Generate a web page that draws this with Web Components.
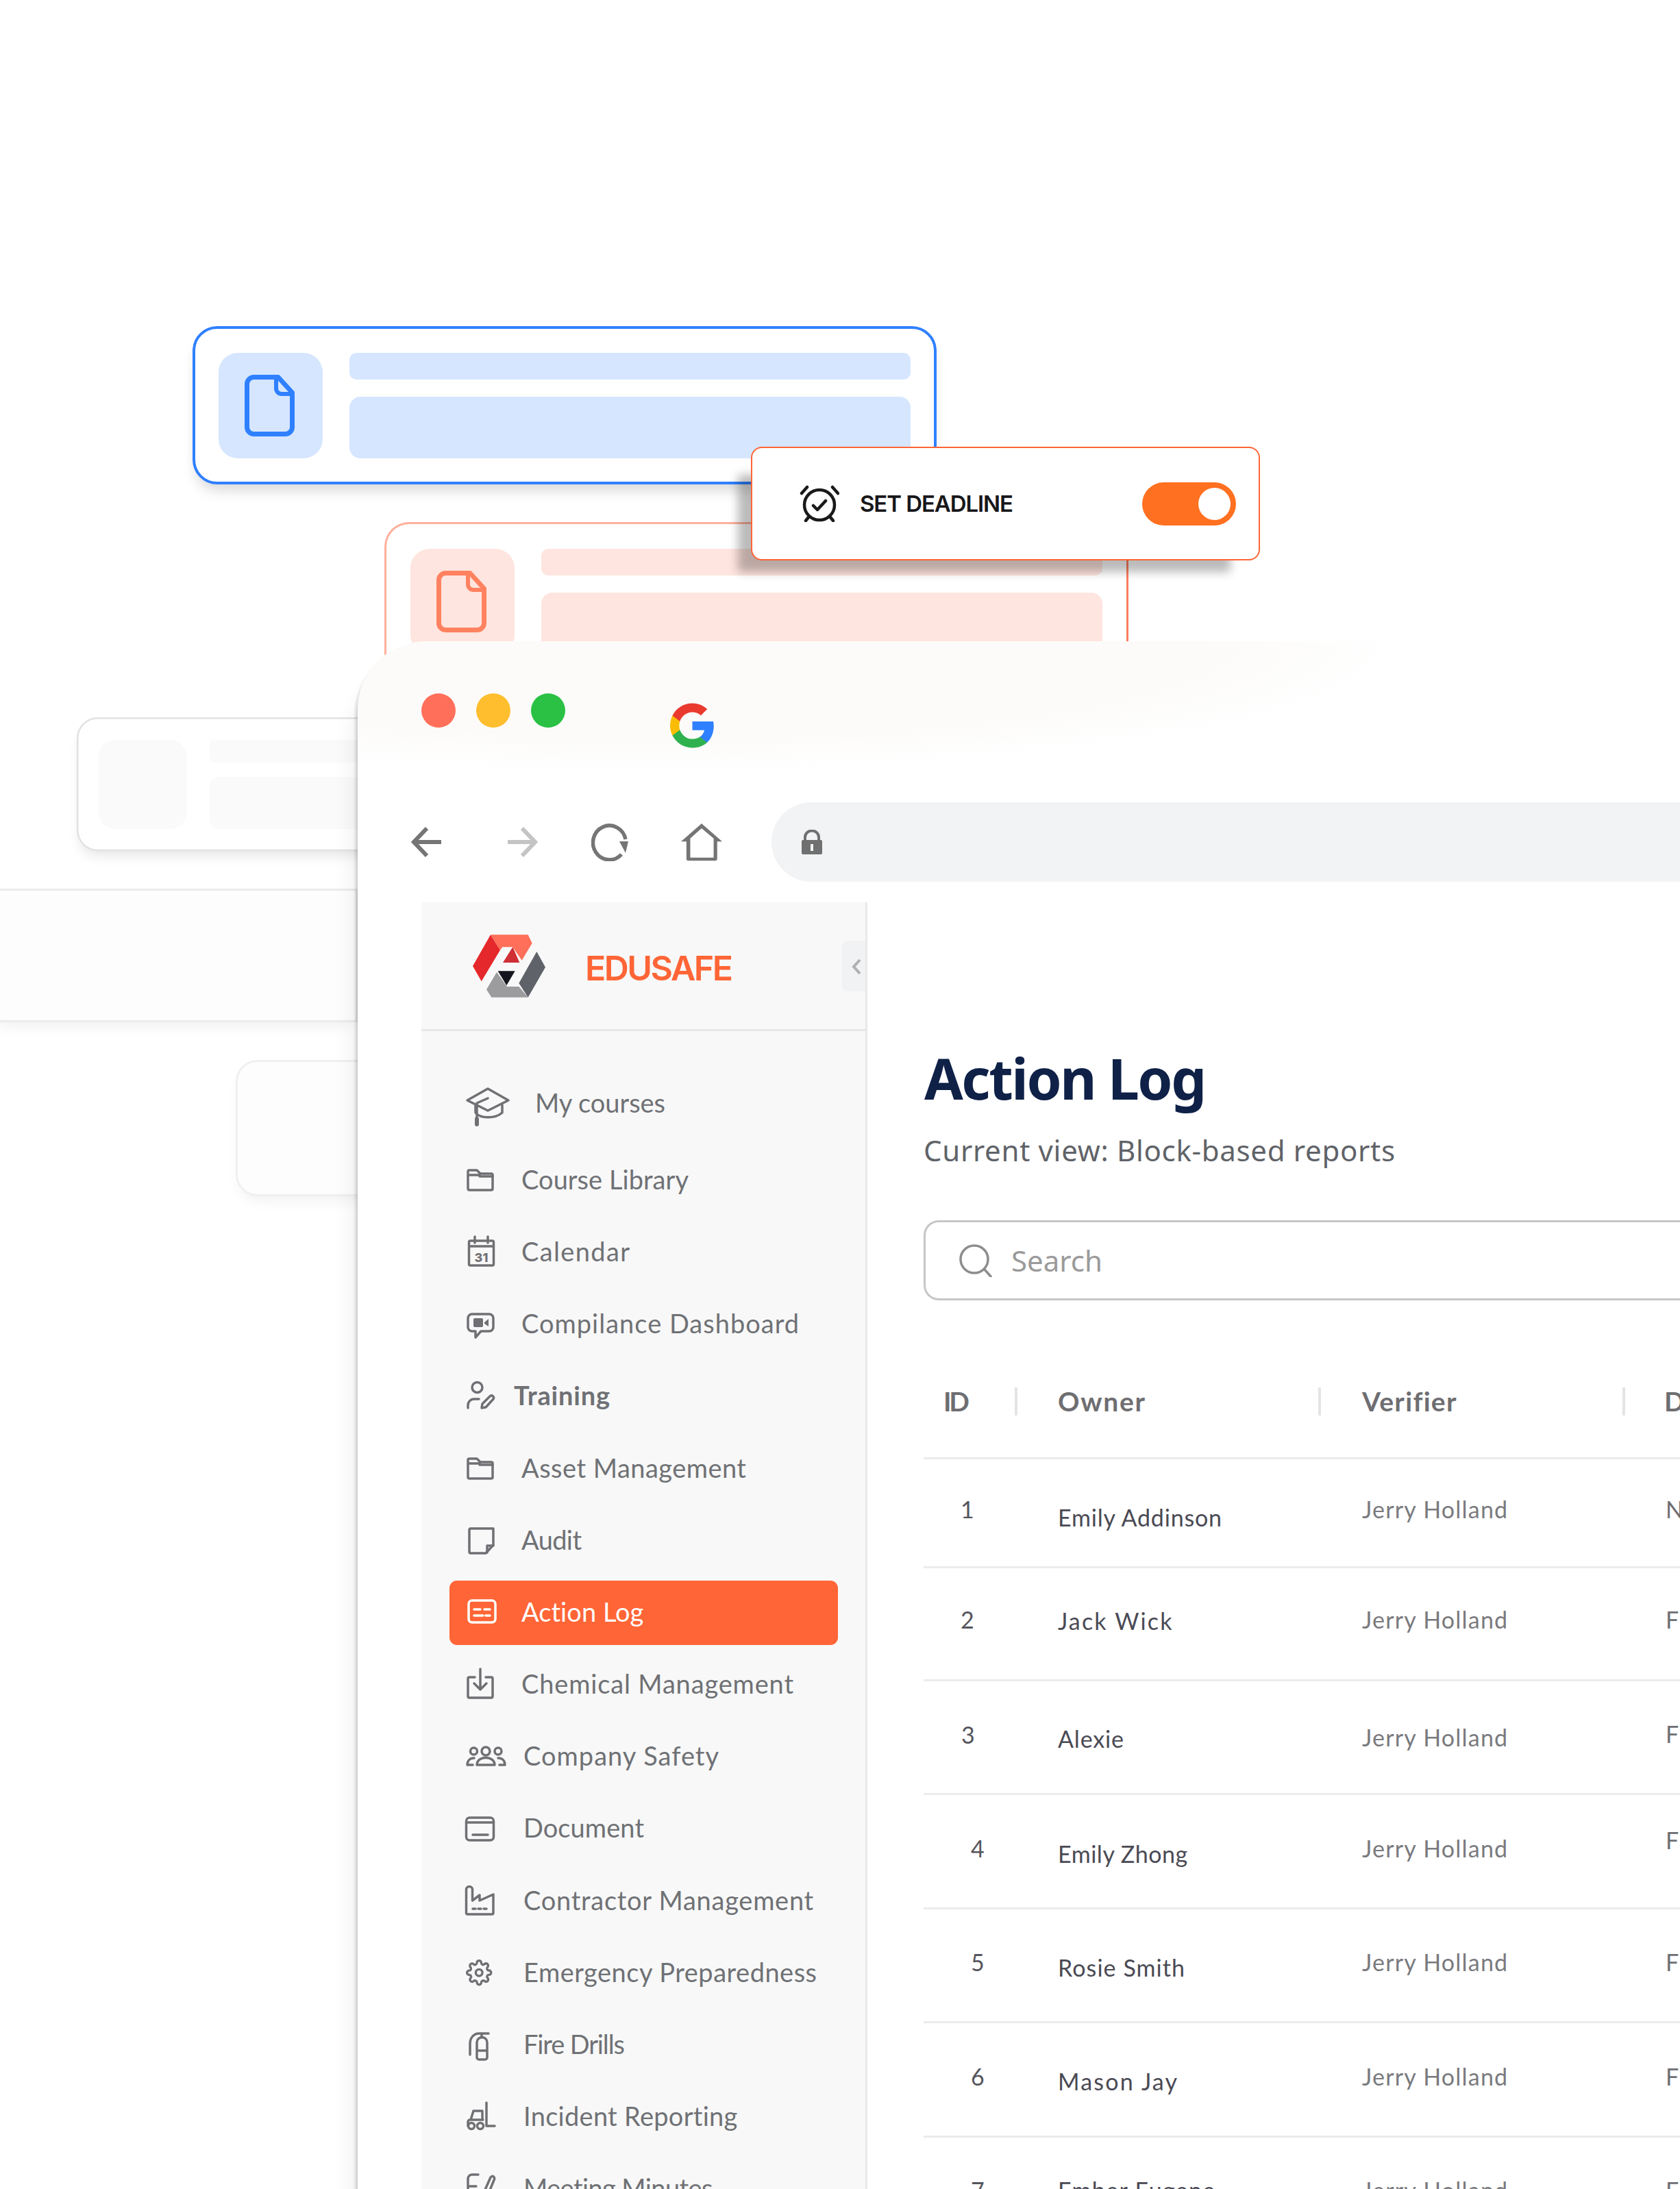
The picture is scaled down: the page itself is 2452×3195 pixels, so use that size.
<!doctype html>
<html lang="en"><head><meta charset="utf-8"><title>Action Log</title>
<style>
html,body{margin:0;padding:0;background:#fff}
body{width:2452px;height:3195px;overflow:hidden;font-family:Lato,"Liberation Sans",sans-serif}
illustration-canvas{display:block;position:relative;width:2452px;height:3195px;overflow:hidden}
</style></head><body>
<illustration-canvas>
  <ghost-panel style="left:-10px;top:1297px;width:532px;height:195px;--r:0px;--bc:#ececec"></ghost-panel>
  <ghost-panel style="left:344px;top:1547px;width:300px;height:199px;--r:32px;--bc:#f0f0f0"></ghost-panel>
  <doc-card tone="ghost" style="left:112px;top:1047px;transform:scale(.845)"></doc-card>
  <doc-card tone="salmon" style="left:561px;top:762px;width:1086px"></doc-card>
  <doc-card tone="blue" style="left:281px;top:476px;width:1086px"></doc-card>
  <deadline-card style="left:1096px;top:652px"></deadline-card>
  <browser-window style="left:522px;top:936px">
    <browser-chrome></browser-chrome>
    <div style="display:flex;padding-top:30px;align-items:stretch;height:1878px">
      <side-bar>
        <nav-item icon="cap" x="100" w="191" first>My courses</nav-item>
        <nav-item icon="folder" x="80" w="244">Course Library</nav-item>
        <nav-item icon="calendar" x="80" w="158">Calendar</nav-item>
        <nav-item icon="video" x="80" w="405">Compilance Dashboard</nav-item>
        <nav-item icon="training" x="69" w="140" bold>Training</nav-item>
        <nav-item icon="folder" x="80" w="328">Asset Management</nav-item>
        <nav-item icon="note" x="80" w="88">Audit</nav-item>
        <nav-item icon="idcard" x="80" w="179" active>Action Log</nav-item>
        <nav-item icon="tray" x="80" w="397">Chemical Management</nav-item>
        <nav-item icon="people" x="83" w="286">Company Safety</nav-item>
        <nav-item icon="card" x="83" w="176">Document</nav-item>
        <nav-item icon="factory" x="83" w="424">Contractor Management</nav-item>
        <nav-item icon="gear" x="83" w="429">Emergency Preparedness</nav-item>
        <nav-item icon="ext" x="83" w="148">Fire Drills</nav-item>
        <nav-item icon="fork" x="83" w="313">Incident Reporting</nav-item>
        <nav-item icon="minutes" x="83" w="277">Meeting Minutes</nav-item>
      </side-bar>
      <main-panel></main-panel>
    </div>
  </browser-window>
</illustration-canvas>
<script>
const fitTo=(el,text,w)=>{
  const cs=getComputedStyle(el),c=document.createElement('canvas').getContext('2d');
  c.font=`${cs.fontWeight} ${cs.fontSize} ${cs.fontFamily}`;
  const m=c.measureText(text).width,n=Math.max(text.length-1,1);
  el.style.letterSpacing=((w-m)/n).toFixed(3)+'px';
};
class FitText extends HTMLElement{
  constructor(){super();this.attachShadow({mode:'open'}).innerHTML='<style>:host{display:inline-block;white-space:nowrap}</style><slot></slot>'}
  connectedCallback(){fitTo(this,this.textContent.trim(),+this.getAttribute('w'))}
}
customElements.define('fit-text',FitText);

const DOC=(c)=>`<svg style="margin-left:-3px" width="73" height="90" viewBox="0 0 73 90" fill="none" stroke="${c}" stroke-width="7" stroke-linejoin="round"><path d="M14 3.5H49L69.5 26V76.5a10 10 0 0 1-10 10H13.5a10 10 0 0 1-10-10V13.5a10 10 0 0 1 10-10z"/><path d="M46 4V20a8 8 0 0 0 8 8H69" stroke-width="6"/></svg>`;
const TONES={
 blue:{b:'#2f80ff',br:'#2f80ff',f:'#d6e6ff',i:DOC('#2f80ff'),w:4,sh:'0 14px 20px -6px rgba(0,0,0,.16)'},
 salmon:{b:'#ffb09b',br:'#ff7d5e',f:'#ffe5df',i:DOC('#ff8260'),w:3,sh:'none'},
 ghost:{b:'#e2e2e2',br:'#e2e2e2',f:'#fafafa',i:'',w:3,sh:'0 14px 22px -6px rgba(0,0,0,.10)'}
};
class DocCard extends HTMLElement{
  connectedCallback(){
    const t=TONES[this.getAttribute('tone')];
    this.attachShadow({mode:'open'}).innerHTML=`<style>
    :host{position:absolute;display:block;transform-origin:0 0;box-sizing:border-box;width:1087px;height:231px;background:#fff;border:${t.w}px solid ${t.b};border-right-color:${t.br};border-radius:36px;box-shadow:${t.sh};padding:${39-t.w}px ${38-t.w}px;}
    .row{display:flex;gap:39px}
    .ic{width:152px;height:154px;flex:none;border-radius:28px;background:${t.f};display:flex;align-items:center;justify-content:center}
    .bars{flex:1;display:flex;flex-direction:column;gap:25px}
    .a{height:39px;border-radius:10px;background:${t.f}}
    .b{height:90px;border-radius:16px;background:${t.f}}
    </style><div class="row"><div class="ic">${t.i}</div><div class="bars"><div class="a"></div><div class="b"></div></div></div>`;
  }
}
customElements.define('doc-card',DocCard);

class GhostPanel extends HTMLElement{
  constructor(){super();this.attachShadow({mode:'open'}).innerHTML=`<style>:host{position:absolute;display:block;box-sizing:border-box;background:#fdfdfd;border:3px solid var(--bc);border-radius:var(--r);box-shadow:0 12px 22px -8px rgba(0,0,0,.07)}</style>`}
}
customElements.define('ghost-panel',GhostPanel);

class DeadlineCard extends HTMLElement{
  constructor(){super();this.attachShadow({mode:'open'}).innerHTML=`<style>
  :host{position:absolute;display:flex;align-items:center;box-sizing:border-box;width:743px;height:166px;background:#fff;border:2px solid #ff6536;border-radius:16px;box-shadow:-31px 29px 14px -12px rgba(0,0,0,.27);padding-left:69px;font:600 33px Inter,sans-serif;color:#17171a}
  svg.al{flex:none;margin-right:30px}
  fit-text{line-height:40px}
  .tg{margin-left:auto;margin-right:33px;width:137px;height:63px;border-radius:32px;background:#ff7020;display:flex;align-items:center;justify-content:flex-end;padding-right:8px;box-sizing:border-box}
  .kn{width:47px;height:47px;border-radius:50%;background:#fff}
  </style>
  <svg class="al" width="58" height="54" viewBox="1167 709 58 54" fill="none" stroke="#1a1a1a" stroke-width="4.5" stroke-linecap="round" stroke-linejoin="round"><circle cx="1196" cy="738" r="22"/><path d="M1170 721l8-9M1223 721l-8-9M1180 756l-4 5M1212 756l4 5M1187 739l6 6 12-13"/></svg>
  <fit-text w="224">SET DEADLINE</fit-text>
  <div class="tg"><div class="kn"></div></div>`}
}
customElements.define('deadline-card',DeadlineCard);

class BrowserWindow extends HTMLElement{
  constructor(){super();this.attachShadow({mode:'open'}).innerHTML=`<style>
  :host{position:absolute;display:block;width:1930px;height:2259px;background:#fff;border-radius:100px 0 0 0;box-shadow:-3px 7px 4px rgba(0,0,0,.17),-10px 44px 30px rgba(0,0,0,.06)}
  .clip{width:100%;height:100%;overflow:hidden;border-radius:100px 0 0 0}
  </style><div class="clip"><slot></slot></div>`}
}
customElements.define('browser-window',BrowserWindow);

class BrowserChrome extends HTMLElement{
  constructor(){super();this.attachShadow({mode:'open'}).innerHTML=`<style>
  :host{display:block}
  .title{height:235px;box-sizing:border-box;display:flex;align-items:flex-start;padding:76px 0 0 93px;gap:30px;background:radial-gradient(ellipse 1120px 190px at 420px 0,#fcfbf9 72%,#fff 100%)}
  .dot{width:50px;height:50px;border-radius:50%;flex:none}
  .g{margin:14px 0 0 123px;display:block}
  .tools{height:116px;display:flex;align-items:center;padding-left:78px}
  .tools svg{display:block;flex:none}
  .url{flex:1;height:116px;margin-left:72px;background:#f1f3f4;border-radius:58px 0 0 58px;display:flex;align-items:center;padding-left:44px}
  </style>
  <div class="title">
    <span class="dot" style="background:#ff6f59"></span><span class="dot" style="background:#ffbe2e"></span><span class="dot" style="background:#2ac144"></span>
    <svg class="g" width="65" height="66" viewBox="2 2 44 44"><path fill="#2f80ff" d="M45.12 24.5c0-1.56-.14-3.06-.4-4.5H24v8.51h11.84c-.51 2.75-2.06 5.08-4.39 6.64v5.52h7.11c4.16-3.83 6.56-9.47 6.56-16.17z"/><path fill="#2fb14f" d="M24 46c5.94 0 10.92-1.97 14.56-5.33l-7.11-5.52c-1.97 1.32-4.49 2.1-7.45 2.1-5.73 0-10.58-3.87-12.31-9.07H4.34v5.7C7.96 41.07 15.4 46 24 46z"/><path fill="#fbbc05" d="M11.69 28.18C11.25 26.86 11 25.45 11 24s.25-2.86.69-4.18v-5.7H4.34C2.85 17.09 2 20.45 2 24c0 3.55.85 6.91 2.34 9.88l7.35-5.7z"/><path fill="#ea3a2f" d="M24 10.75c3.23 0 6.13 1.11 8.41 3.29l6.31-6.31C34.91 4.18 29.93 2 24 2 15.4 2 7.96 6.93 4.34 14.12l7.35 5.7c1.73-5.2 6.58-9.07 12.31-9.07z"/></svg>
  </div>
  <div class="tools">
    <svg width="44" height="44" viewBox="0 0 44 44" fill="none" stroke="#757575" stroke-width="6"><path d="M44 22H4M23 2L4 22l19 20"/></svg>
    <svg style="margin-left:97px" width="44" height="44" viewBox="0 0 44 44" fill="none" stroke="#c4c4c4" stroke-width="6"><path d="M0 22h40M21 2l19 20-19 20"/></svg>
    <svg style="margin-left:78px" width="54" height="56" viewBox="0 0 54 56"><path d="M50 24A24 25 0 1 0 44 46" fill="none" stroke="#757575" stroke-width="5.5"/><path d="M41 27h13l-4 17z" fill="#757575"/></svg>
    <svg style="margin-left:77px" width="60" height="55" viewBox="0 0 58 53"><path fill="#757575" fill-rule="evenodd" d="M0 25.3L29 0l29 25.3H51V50a2.3 2.3 0 0 1-2.300 2.300H10a2.300 2.300 0 0 1-2.400-2.300V25.300zM13 21V48H46V21L29 6.600z"/></svg>
    <div class="url"><svg width="30" height="36" viewBox="0 0 30 36"><path d="M5 15V11a10 9.500 0 0 1 20 0v4" fill="none" stroke="#707070" stroke-width="4"/><rect y="15" width="30" height="21" rx="2" fill="#707070"/><rect x="13" y="21" width="4" height="10" fill="#f1f3f4"/></svg></div>
  </div>`}
}
customElements.define('browser-chrome',BrowserChrome);

class SideBar extends HTMLElement{
  constructor(){super();this.attachShadow({mode:'open'}).innerHTML=`<style>
  :host{display:block;flex:none;width:651px;margin-left:93px;box-sizing:border-box;background:#f8f8f8;border-right:3px solid #e9e9e9}
  .head{height:188px;box-sizing:border-box;border-bottom:3px solid #e8e8e8;display:flex;align-items:center;padding-left:65px;margin-right:-3px}
  .logo{flex:none;display:block}
  .brand{margin-left:44px;font:600 50px Inter,sans-serif;color:#ff6536;line-height:58px;padding-top:6px}
  .col{margin-left:auto;margin-right:3px;width:34px;height:74px;background:#f1f2f3;border-radius:8px 0 0 8px;display:flex;align-items:center;justify-content:flex-end;padding:3px 6px 0 0;box-sizing:border-box}
  .list{padding-top:51px}
  </style>
  <div class="head">
    <svg class="logo" width="130" height="110" viewBox="0 0 390 330">
      <path fill="#e5282b" d="M108 28l42 67-82 137-38-67z"/>
      <path fill="#ff6f59" d="M108 28h164l18 37-45 75-40-58h-45l-10 13z"/>
      <path fill="#cf2f35" d="M205 82l30 68h-73z"/>
      <path fill="#60626a" d="M310 102l38 68-76 132-40-62z"/>
      <path fill="#9c9c9e" d="M135 192l45 63h52l40 47H112l-22-34z"/>
      <path fill="#15151d" d="M140 187h75l-37 63z"/>
    </svg>
    <fit-text class="brand" w="216">EDUSAFE</fit-text>
    <div class="col"><svg width="14" height="24" viewBox="0 0 14 24" fill="none" stroke="#b0b0b2" stroke-width="4"><path d="M12 2L3 12l9 10"/></svg></div>
  </div>
  <div class="list"><slot></slot></div>`}
}
customElements.define('side-bar',SideBar);

const ICONS={
 cap:`<path d="M1-3L31-20 61-3 31 12z"/><path d="M13 4V15C20 24 42 24 52 15V4"/><path d="M31-6L15 1V26"/><path d="M15 24V32" stroke-width="6" stroke-linecap="round"/>`,
 folder:`<path d="M2-11a2 2 0 0 1 2-2H15l5 5H36a2 2 0 0 1 2 2V14a2 2 0 0 1-2 2H4a2 2 0 0 1-2-2zM2-6H19"/><path d="M19-4H38"/>`,
 calendar:`<rect x="3.500" y="-15" width="36" height="36" rx="2"/><path d="M4-7H39M12-21V-12M31-21V-12"/><text x="21.500" y="16" text-anchor="middle" font-family="Inter,sans-serif" font-weight="800" font-size="18" fill="#707074" stroke="none">31</text>`,
 video:`<path d="M8-13H33a6 6 0 0 1 6 6V6a6 6 0 0 1-6 6H21L13 21V12H8a6 6 0 0 1-6-6V-7a6 6 0 0 1 6-6z"/><rect x="10" y="-7" width="14" height="13" rx="2" fill="#707074" stroke="none"/><path d="M26-1l6-5V5l-6-4z" fill="#707074" stroke="none"/>`,
 training:`<circle cx="15.500" cy="-11" r="7.500"/><path d="M2 19V15a9 9 0 0 1 9-9H18"/><path d="M22 19l1-6L34 2c3-3 7 1 5 4L28 18z"/>`,
 note:`<path d="M6-16H39V8L28 20H6a2 2 0 0 1-2-2V-14a2 2 0 0 1 2-2z"/><path d="M39 9H30V19"/>`,
 idcard:`<rect x="3" y="-16" width="39" height="32" rx="5"/><path d="M11-3H20M26-3H34M11 6H24M28 6H34"/>`,
 tray:`<path d="M12-9H4a2 2 0 0 0-2 2V19a2 2 0 0 0 2 2H36a2 2 0 0 0 2-2V-7a2 2 0 0 0-2-2H28"/><path d="M20-21V8M11 0l9 9 9-9"/>`,
 people:`<circle cx="28" cy="-6" r="6"/><circle cx="10.500" cy="-6" r="5"/><circle cx="46" cy="-6" r="5"/><path d="M15 14c0-14 26-14 26 0zM11 4C5 4 1 8 1 14H9M46 4c6 0 10 4 10 10H48"/>`,
 card:`<rect x="-.5" y="-14" width="40" height="33" rx="5"/><path d="M0-7H39M9 11H31"/>`,
 factory:`<path d="M-.5 19V-15a4 4 0 0 1 9 0V1L19-7V1L39-8V19a2 2 0 0 1-2 2H1.500a2 2 0 0 1-2-2z"/><path d="M9 13h4M17 13h4M25 13h4"/>`,
 gear:`<g transform="translate(-1 -18) scale(1.600)" stroke-width="2.100"><circle cx="12" cy="12" r="3"/><path d="M19.400 15a1.650 1.650 0 0 0 .33 1.820l.06.06a2 2 0 0 1 0 2.830 2 2 0 0 1-2.830 0l-.06-.06a1.650 1.650 0 0 0-1.820-.33 1.650 1.650 0 0 0-1 1.510V21a2 2 0 0 1-2 2 2 2 0 0 1-2-2v-.09A1.650 1.650 0 0 0 9 19.400a1.650 1.650 0 0 0-1.820.33l-.06.06a2 2 0 0 1-2.830 0 2 2 0 0 1 0-2.830l.06-.06a1.650 1.650 0 0 0 .33-1.820 1.650 1.650 0 0 0-1.510-1H3a2 2 0 0 1-2-2 2 2 0 0 1 2-2h.09A1.650 1.650 0 0 0 4.600 9a1.650 1.650 0 0 0-.33-1.820l-.06-.06a2 2 0 0 1 0-2.830 2 2 0 0 1 2.830 0l.06.06a1.650 1.650 0 0 0 1.820.33H9a1.650 1.650 0 0 0 1-1.510V3a2 2 0 0 1 2-2 2 2 0 0 1 2 2v.09a1.650 1.650 0 0 0 1 1.510 1.650 1.650 0 0 0 1.820-.33l.06-.06a2 2 0 0 1 2.830 0 2 2 0 0 1 0 2.830l-.06.06a1.650 1.650 0 0 0-.33 1.820V9a1.650 1.650 0 0 0 1.510 1H21a2 2 0 0 1 2 2 2 2 0 0 1-2 2h-.09a1.650 1.650 0 0 0-1.510 1z"/></g>`,
 ext:`<path d="M15-2a7.500 7.500 0 0 1 15 0V20a3 3 0 0 1-3 3H18a3 3 0 0 1-3-3zM15 10H30"/><path d="M5 16V0C5-8 10-15 18-15H32M22-15V-9"/>`,
 fork:`<path d="M29-19V15H41"/><path d="M6 6L10-7H23V5M2 15V9a3 3 0 0 1 3-3H24"/><circle cx="7" cy="15" r="4.500"/><circle cx="20" cy="15" r="4.500"/>`,
 minutes:`<path d="M2 20V-13a6 6 0 0 1 6-6H17M2-2H14"/><path d="M22 20l1-8L35-15c3-4 7 0 5 4L28 18z"/>`
};
class NavItem extends HTMLElement{
  connectedCallback(){
    const active=this.hasAttribute('active'),bold=this.hasAttribute('bold'),x=+this.getAttribute('x');
    const stroke=active?'#fff':'#707074';
    const s=this.attachShadow({mode:'open'});
    s.innerHTML=`<style>
    :host{display:flex;align-items:center;height:105.200px;${this.hasAttribute('first')?'margin-bottom:7px;':''}font:${bold?700:400} 38px Lato,sans-serif;color:${active?'#fff':'#6f7175'}}
    .r{display:flex;align-items:center;box-sizing:border-box;margin-left:41px;width:567px;height:94px;padding-left:25px;border-radius:11px;${active?'background:#ff6536;margin-top:4px;':''}}
    .ic{width:${x}px;flex:none;height:80px;${active?'margin-top:-4px;':''}}
    svg{display:block;overflow:visible}
    .t{white-space:nowrap;line-height:46px;${active?'margin-top:-4px;':''}}
    </style><div class="r"><div class="ic"><svg width="70" height="80" viewBox="0 -40 70 80" fill="none" stroke="${stroke}" stroke-width="3.500" stroke-linejoin="round" stroke-linecap="round">${ICONS[this.getAttribute('icon')]}</svg></div><span class="t"><slot></slot></span></div>`;
    fitTo(s.querySelector('.t'),this.textContent.trim(),+this.getAttribute('w'));
  }
}
customElements.define('nav-item',NavItem);

const ROWS=[
 {id:'1',x:54,o:'Emily Addinson',ow:241,h:159,p:[73,85,73,73],l:'Near Miss'},
 {id:'2',x:54,o:'Jack Wick',ow:167,h:165,p:[75,77,75,75],l:'Fire Drill'},
 {id:'3',x:55,o:'Alexie',ow:96,h:166,p:[78,84,82,77],l:'Fire Drill'},
 {id:'4',x:69,o:'Emily Zhong',ow:190,h:167,p:[78,86,78,66],l:'Fire Drill'},
 {id:'5',x:69,o:'Rosie Smith',ow:185,h:166,p:[77,85,77,77],l:'Fire Drill'},
 {id:'6',x:69,o:'Mason Jay',ow:175,h:167,p:[78,85,78,78],l:'Fire Drill'},
 {id:'7',x:69,o:'Ember Eugene',ow:230,h:100,p:[77,77,77,77],l:'Fire Drill'}
];
class MainPanel extends HTMLElement{
  constructor(){super();
    const rows=ROWS.map((r,i)=>`<div class="row" style="height:${r.h}px${i==6?';border:0':''}">
      <div class="c id" style="width:196px;padding:${r.p[0]-21}px 0 0 ${r.x}px">${r.id}</div>
      <div class="c own" style="width:444px;padding-top:${r.p[1]-21}px"><fit-text w="${r.ow}">${r.o}</fit-text></div>
      <div class="c ver" style="width:443px;padding-top:${r.p[2]-21}px"><fit-text w="213">Jerry Holland</fit-text></div>
      <div class="c ver" style="width:300px;padding-top:${r.p[3]-21}px;color:#6f6f73">${r.l}</div>
    </div>`).join('');
    this.attachShadow({mode:'open'}).innerHTML=`<style>
    :host{display:block;flex:1;min-width:0;padding-left:82px;overflow:hidden}
    h1{margin:0;padding-top:204px;height:104px;padding-left:1px;font:700 82px/104px "Noto Sans",sans-serif;color:#0f2147}
    .sub{margin-top:26px;font:400 42px/56px "Noto Sans",sans-serif;color:#5f6368}
    .search{margin-top:74px;width:1300px;height:117px;box-sizing:border-box;border:3px solid #c6c6c6;border-right:0;border-radius:22px 0 0 22px;display:flex;align-items:center;padding-left:49px;gap:28px;font:400 42px "Noto Sans",sans-serif;color:#9a9a9a}
    .search svg{display:block;flex:none}
    .head{margin-top:111px;width:1300px;height:121px;box-sizing:border-box;border-bottom:3px solid #ececec;display:flex;align-items:flex-start;font:700 39px/46px Lato,sans-serif;color:#6e6e72}
    .head .h{white-space:nowrap;padding-top:13px}
    .sep{width:4px;height:41px;margin-top:16px;background:#e4e4e4;flex:none}
    .row{display:flex;width:1300px;box-sizing:border-box;border-bottom:3px solid #ececec;font:400 34px/42px Lato,sans-serif}
    .c{box-sizing:border-box;flex:none;white-space:nowrap}
    .id{color:#55555c}.own{color:#4a4a54}.ver{color:#7a7a7e}
    </style>
    <h1><fit-text w="412">Action Log</fit-text></h1>
    <div class="sub"><fit-text w="688">Current view: Block-based reports</fit-text></div>
    <div class="search"><svg width="48" height="48" viewBox="0 0 48 48" fill="none" stroke="#8d8d8d" stroke-width="3.500" stroke-linecap="round"><circle cx="22" cy="22" r="20"/><path d="M37 37l9 10"/></svg><fit-text w="133">Search</fit-text></div>
    <div class="head">
      <div class="h" style="width:133px;box-sizing:border-box;padding-left:29px"><fit-text w="38">ID</fit-text></div><div class="sep"></div>
      <div class="h" style="margin-left:59px;width:380px"><fit-text w="127">Owner</fit-text></div><div class="sep"></div>
      <div class="h" style="margin-left:60px;width:380px"><fit-text w="137">Verifier</fit-text></div><div class="sep"></div>
      <div class="h" style="margin-left:57px">Description</div>
    </div>${rows}`;
  }
}
customElements.define('main-panel',MainPanel);
</script>
</body></html>
